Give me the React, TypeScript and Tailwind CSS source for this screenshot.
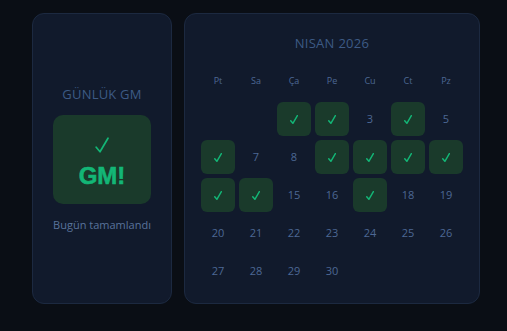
import React from 'react';

const weekDays = ['Pt', 'Sa', 'Ça', 'Pe', 'Cu', 'Ct', 'Pz'];
const doneDays = [1, 2, 4, 6, 9, 10, 11, 12, 13, 14, 17];

const Check: React.FC<{ w: number; h: number; sw: number }> = ({ w, h, sw }) => (
  <svg width={w} height={h} viewBox="0 0 14 16" fill="none">
    <path d="M1.2 10.2 L5 14.8 L13 1.2" stroke="#13b676" strokeWidth={sw} strokeLinecap="round" strokeLinejoin="round" />
  </svg>
);

const DayCell: React.FC<{ day: number | null }> = ({ day }) => {
  if (day === null) return <div className="h-[34px]" />;
  if (doneDays.includes(day)) {
    return (
      <div className="h-[34px] rounded-md bg-[#1a3a2b] flex items-center justify-center">
        <Check w={8} h={9} sw={2.6} />
      </div>
    );
  }
  return (
    <div className="h-[34px] flex items-center justify-center text-[11px] text-[#4d6894]">
      {day}
    </div>
  );
};

const App: React.FC = () => {
  // April 2026 starts on Wednesday
  const cells: (number | null)[] = [null, null];
  for (let d = 1; d <= 30; d++) cells.push(d);

  return (
    <div
      className="w-[507px] h-[331px] bg-[#0a0e15] flex gap-3 pl-8 pr-[27px] pt-[13px] pb-[27px]"
      style={{ fontFamily: '"Open Sans", "Noto Sans", sans-serif' }}
    >
      <div className="w-[140px] shrink-0 rounded-xl border border-[#1c2940] bg-[#111a2c] flex flex-col items-center justify-center">
        <div className="text-[13px] leading-5 text-[#3d5a85] tracking-[0.2px]">GÜNLÜK GM</div>
        <div className="mt-[11px] w-[98px] h-[89px] rounded-[10px] bg-[#1a3a2b] flex flex-col items-center pt-[22px]">
          <Check w={14} h={16} sw={1.7} />
          <div
            className="mt-[11px] text-[24px] leading-6 font-black text-[#13b676] [-webkit-text-stroke:0.6px_#13b676]"
            style={{ fontFamily: '"Liberation Sans", Arial, sans-serif' }}
          >
            GM!
          </div>
        </div>
        <div className="mt-[13px] text-[11px] leading-4 text-[#59739b]">Bugün tamamlandı</div>
      </div>

      <div className="flex-1 rounded-xl border border-[#1c2940] bg-[#111a2c] p-4">
        <div className="h-[26px] pt-px flex items-center justify-center text-[13px] text-[#3d5a85] tracking-[0.3px]">
          NISAN 2026
        </div>
        <div className="mt-2 grid grid-cols-7 gap-1">
          {weekDays.map((w) => (
            <div key={w} className="h-[34px] flex items-center justify-center text-[9px] text-[#4d6894]">
              {w}
            </div>
          ))}
          {cells.map((d, i) => (
            <DayCell key={i} day={d} />
          ))}
        </div>
      </div>
    </div>
  );
};

export default App;
